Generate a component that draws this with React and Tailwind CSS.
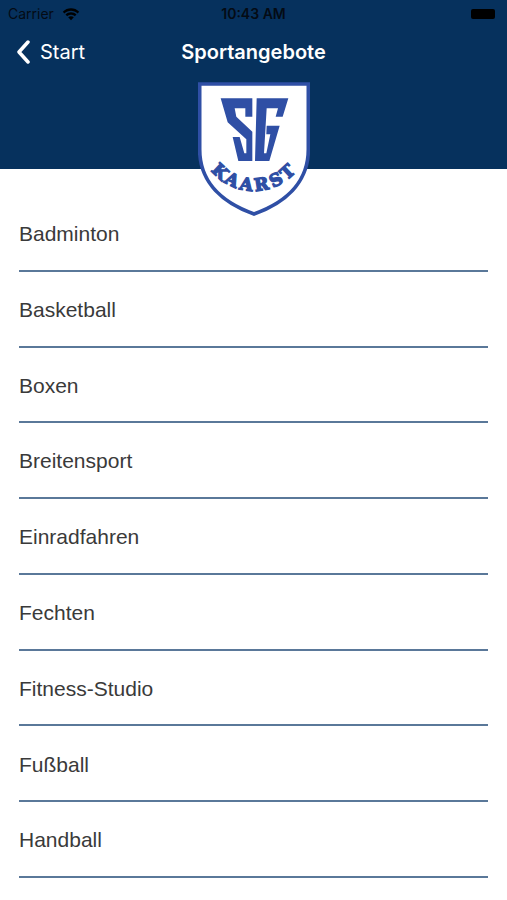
const sports = [
  "Badminton",
  "Basketball",
  "Boxen",
  "Breitensport",
  "Einradfahren",
  "Fechten",
  "Fitness-Studio",
  "Fußball",
  "Handball",
];

function WifiIcon() {
  return (
    <svg viewBox="0 0 18 14" className="h-3.5 w-4.5" aria-hidden="true">
      <path d="M.8 4.8C5.4.2 12.6.2 17.2 4.8L15.6 6.5C11.9 2.8 6.1 2.8 2.4 6.5Z" />
      <path d="M3.5 7.6c3.1-3 7.9-3 11 0l-1.7 1.7c-2.1-2-5.5-2-7.6 0Z" />
      <path d="M6.2 10.3c1.6-1.5 4-1.5 5.6 0L9 13.2Z" />
    </svg>
  );
}

function StatusBar() {
  return (
    <div className="grid h-7 grid-cols-3 items-center px-2 text-[14px] leading-none text-[#040b14]">
      <div className="flex items-center gap-2">
        <span>Carrier</span>
        <WifiIcon />
      </div>
      <span className="text-center font-semibold">10:43 AM</span>
      <span className="mr-1 h-2.5 w-6 justify-self-end rounded-xs bg-black" />
    </div>
  );
}

function ClubCrest() {
  return (
    <svg viewBox="42 36 336 402" className="h-[134px] w-28" role="img" aria-label="SG Kaarst">
      <path
        d="M47 42H373V238C373 340 300 400 210 432C120 400 47 340 47 238Z"
        fill="#fff"
        stroke="#2f4fa5"
        strokeWidth="11"
      />
      <g fill="#2f4fa5">
        <path d="M110 85H205V140H184V115H152L157 140L205 185V273H163L146 201H167L181 250H187V208L131 157Z" />
        <path d="M218 85H313L296 140H275L282 115H248L240 250H247L259 193H247L248 167H287L256 273H213Z" />
        <path id="crest-arc" d="M70 286A166 166 0 0 0 350 286" fill="none" />
        <text
          x="41 91 141 192 243 290"
          fontSize="52"
          fontWeight="700"
          textAnchor="middle"
          stroke="#2f4fa5"
          strokeWidth="4"
          fontFamily="'DejaVu Serif', serif"
        >
          <textPath href="#crest-arc">KAARST</textPath>
        </text>
      </g>
    </svg>
  );
}

export default function App() {
  return (
    <div className="flex min-h-screen flex-col bg-white font-['Inter',sans-serif]">
      <header className="relative h-[169px] bg-[#06315d]">
        <StatusBar />
        <nav className="grid h-12 grid-cols-[1fr_auto_1fr] items-center px-4 text-[20px] text-white">
          <button type="button" className="flex items-center gap-2 justify-self-start">
            <svg viewBox="0 0 16 24" className="h-6 w-4" fill="none" stroke="currentColor" strokeWidth="3.5" strokeLinecap="round" strokeLinejoin="round" aria-hidden="true">
              <path d="M12 2L3 12L12 22" />
            </svg>
            <span>Start</span>
          </button>
          <h1 className="font-semibold">Sportangebote</h1>
        </nav>
        <div className="absolute top-[82px] left-1/2 -translate-x-1/2">
          <ClubCrest />
        </div>
      </header>
      <main className="flex flex-1 flex-col px-[19px] pt-[27px] pb-[22px]">
        <ul className="grid flex-1 auto-rows-fr font-['Liberation_Sans',sans-serif] text-[21px] text-[#3a3a3a]">
          {sports.map((sport) => (
            <li key={sport} className="flex border-b-2 border-[#5a7899]">
              <a href="#" className="flex flex-1 items-center pt-0.5">
                {sport}
              </a>
            </li>
          ))}
        </ul>
      </main>
    </div>
  );
}
